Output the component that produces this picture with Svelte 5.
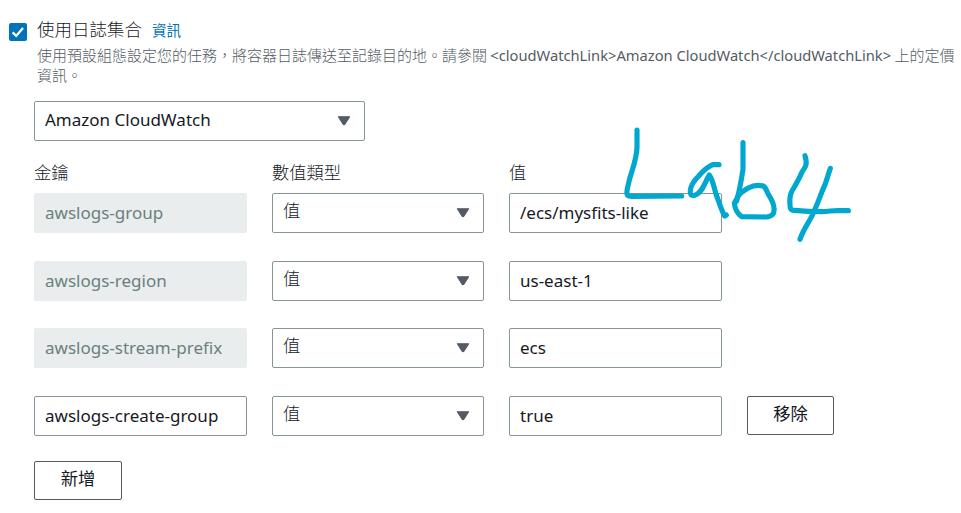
<script>
  const rows = [
    { key: 'awslogs-group', value: '/ecs/mysfits-like', locked: true },
    { key: 'awslogs-region', value: 'us-east-1', locked: true },
    { key: 'awslogs-stream-prefix', value: 'ecs', locked: true },
    { key: 'awslogs-create-group', value: 'true', locked: false }
  ];
</script>

{#snippet caret()}
  <svg class="caret" width="14" height="12" viewBox="0 0 14 12">
    <path d="M1.4 1.8H12.6L8 9Q7 10.4 6 9Z" fill="#545b64" stroke="#545b64" stroke-width="1.2" stroke-linejoin="round" />
  </svg>
{/snippet}

<main>
  <header>
    <span class="check">
      <svg width="18" height="18" viewBox="0 0 18 18">
        <path d="M3.6 9.4L7.2 12.9L14 5" fill="none" stroke="#fff" stroke-width="2.3" />
      </svg>
    </span>
    <div class="intro">
      <div class="title"><span class="name">使用日誌集合</span><span class="info">資訊</span></div>
      <div class="desc">使用預設組態設定您的任務，將容器日誌傳送至記錄目的地。請參閱 <span class="lat">&lt;cloudWatchLink&gt;Amazon CloudWatch&lt;/cloudWatchLink&gt;</span> 上的定價<br />資訊。</div>
    </div>
  </header>

  <div class="field select driver"><span class="choice">Amazon CloudWatch</span>{@render caret()}</div>

  <div class="grid labels">
    <span>金鑰</span><span>數值類型</span><span>值</span>
  </div>

  <div class="rows">
    {#each rows as row}
      <div class="grid">
        <div class="field" class:locked={row.locked}>{row.key}</div>
        <div class="field select"><span class="cjk">值</span>{@render caret()}</div>
        <div class="field">{row.value}</div>
        {#if !row.locked}<button>移除</button>{/if}
      </div>
    {/each}
  </div>

  <button class="add">新增</button>

  <svg class="ink" width="240" height="130" viewBox="0 0 720 390">
    <g fill="none" stroke="#00a8d0" stroke-width="15.5" stroke-linecap="round" stroke-linejoin="round">
      <path d="M51 30V82C50 118 36 150 28 180C24 200 19 210 21 222Q22 229 34 229L185 228" />
      <path d="M297 134H278C264 140 250 152 236 168C222 182 212 195 211 212Q209 229 224 226C248 219 254 186 268 165C280 182 282 205 289 225C298 248 303 268 314 288L319 285" />
      <path d="M369 68V148C364 180 359 210 350 243" />
      <path d="M350 237L343 250C345 268 353 282 365 290L438 291Q465 289 462 265C461 240 445 228 440 212Q434 197 424 197C408 194 396 198 385 204C372 211 360 220 353 230" />
      <path d="M555 107C563 132 557 142 546 156C537 178 526 196 516 213C508 228 509 245 510 256Q510 273 524 271C555 274 580 275 604 275C630 274 640 271 660 272H685" />
      <path d="M631 145C622 170 620 186 608 210C597 237 587 268 571 297C559 318 549 332 540 358" />
    </g>
  </svg>
</main>

<style>
  :global(body) {
    background: #fff;
  }

  main {
    position: relative;
    box-sizing: border-box;
    width: 961px;
    height: 513px;
    padding: 17px 0 0 34px;
    overflow: hidden;
    color: #16191f;
    font: 17px/24px 'Noto Sans', 'Noto Sans CJK TC', sans-serif;
  }

  header {
    display: flex;
    margin-left: -25px;
    height: 84px;
  }

  .check {
    width: 18px;
    height: 18px;
    margin-top: 6px;
    border-radius: 2px;
    background: #0073bb;
  }

  .check svg {
    display: block;
  }

  .intro {
    margin-left: 10px;
    white-space: nowrap;
  }

  .title {
    height: 28px;
    display: flex;
    align-items: baseline;
    font-family: 'Noto Sans CJK TC', sans-serif;
    font-weight: 300;
    font-size: 17.5px;
  }

  .info {
    margin-left: 10px;
    color: #0073bb;
    font-size: 14.5px;
    font-weight: 400;
  }

  .desc {
    color: #545b64;
    font: 300 15px/20px 'Noto Sans CJK TC', sans-serif;
  }

  .desc .lat {
    font: 400 14.7px/19px 'Noto Sans', sans-serif;
  }

  .field {
    box-sizing: border-box;
    height: 40px;
    padding: 0 10px;
    border: 1px solid #879596;
    border-radius: 2px;
    background: #fff;
    line-height: 38px;
    white-space: nowrap;
  }

  .locked {
    border-color: #eaeded;
    background: #eaeded;
    color: #6b7f7f;
  }

  .select {
    display: flex;
    justify-content: space-between;
    align-items: center;
    padding-right: 13px;
  }

  .driver {
    width: 331px;
  }

  .choice {
    line-height: 36px;
    margin-top: -2px;
  }

  .grid {
    display: grid;
    grid-template-columns: 213px 212px 213px 87px;
    column-gap: 25px;
  }

  .labels {
    margin-top: 19px;
    height: 33.2px;
    font: 300 17.3px/24px 'Noto Sans CJK TC', sans-serif;
  }

  .cjk {
    font: 300 17.3px/34px 'Noto Sans CJK TC', sans-serif;
    margin-top: -6px;
  }

  .rows {
    display: flex;
    flex-direction: column;
    gap: 27.6px;
  }

  button {
    box-sizing: border-box;
    width: 87px;
    height: 39px;
    padding: 0 0 5px;
    border: 1px solid #545b64;
    border-radius: 2px;
    background: #fff;
    color: #16191f;
    font: 400 17.3px/32px 'Noto Sans CJK TC', sans-serif;
  }

  .add {
    display: block;
    width: 88px;
    margin-top: 25px;
  }

  .ink {
    position: absolute;
    left: 620px;
    top: 120px;
  }
</style>
